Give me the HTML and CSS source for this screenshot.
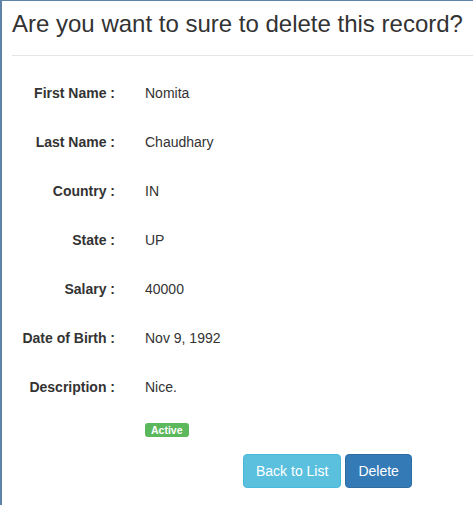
FILE: index.html
```html
<!DOCTYPE html>
<html>
<head>
<meta charset="utf-8">
<link rel="stylesheet" href="styles.css">
</head>
<body>
<div class="modal">
  <div class="modal-header">
    <h4 class="modal-title">Are you want to sure to delete this record?</h4>
  </div>
  <div class="modal-body">
    <dl class="details">
      <dt>First Name :</dt><dd>Nomita</dd>
      <dt>Last Name :</dt><dd>Chaudhary</dd>
      <dt>Country :</dt><dd>IN</dd>
      <dt>State :</dt><dd>UP</dd>
      <dt>Salary :</dt><dd>40000</dd>
      <dt>Date of Birth :</dt><dd>Nov 9, 1992</dd>
      <dt>Description :</dt><dd>Nice.</dd>
    </dl>
    <div class="status"><span class="label-success">Active</span></div>
    <div class="actions">
      <button class="btn btn-info">Back to List</button>
      <button class="btn btn-primary">Delete</button>
    </div>
  </div>
</div>
</body>
</html>
```
FILE: styles.css
```css
html, body {
  margin: 0;
  padding: 0;
  background: #fff;
}
body {
  font-family: "Liberation Sans", Arial, sans-serif;
  font-size: 14px;
  color: #333;
  width: 473px;
  height: 505px;
  overflow: hidden;
}
.modal {
  box-sizing: border-box;
  height: 505px;
  border-left: 2px solid #5f82a8;
  border-top: 1px solid #5f82a8;
}
.modal-header {
  margin-left: 10px;
  border-bottom: 1px solid #e5e5e5;
  height: 54px;
}
.modal-title {
  margin: 0;
  padding-top: 8px;
  font-size: 24px;
  font-weight: normal;
  line-height: 30px;
  color: #333;
  white-space: nowrap;
}
.modal-body {
  padding-top: 27px;
}
.details {
  margin: 0;
  display: grid;
  grid-template-columns: 113px 1fr;
  column-gap: 30px;
  row-gap: 29px;
}
.details dt {
  text-align: right;
  font-weight: bold;
  line-height: 20px;
  white-space: nowrap;
}
.details dd {
  margin: 0;
  line-height: 20px;
}
.status {
  padding-left: 143px;
  margin-top: 26px;
  height: 14px;
}
.label-success {
  display: inline-block;
  background: #5cb85c;
  color: #fff;
  font-weight: bold;
  font-size: 10.5px;
  line-height: 14px;
  height: 14px;
  padding: 0 6px;
  border-radius: 3px;
  vertical-align: top;
}
.actions {
  display: flex;
  gap: 4px;
  padding-left: 241px;
  margin-top: 17px;
}
.btn {
  font-family: "Liberation Sans", Arial, sans-serif;
  font-size: 14px;
  line-height: 20px;
  padding: 6px 12px;
  border-radius: 4px;
  color: #fff;
  border: 1px solid transparent;
  height: 34px;
  box-sizing: border-box;
}
.btn-info {
  background: #5bc0de;
  border-color: #46b8da;
}
.btn-primary {
  background: #337ab7;
  border-color: #2e6da4;
}
```
